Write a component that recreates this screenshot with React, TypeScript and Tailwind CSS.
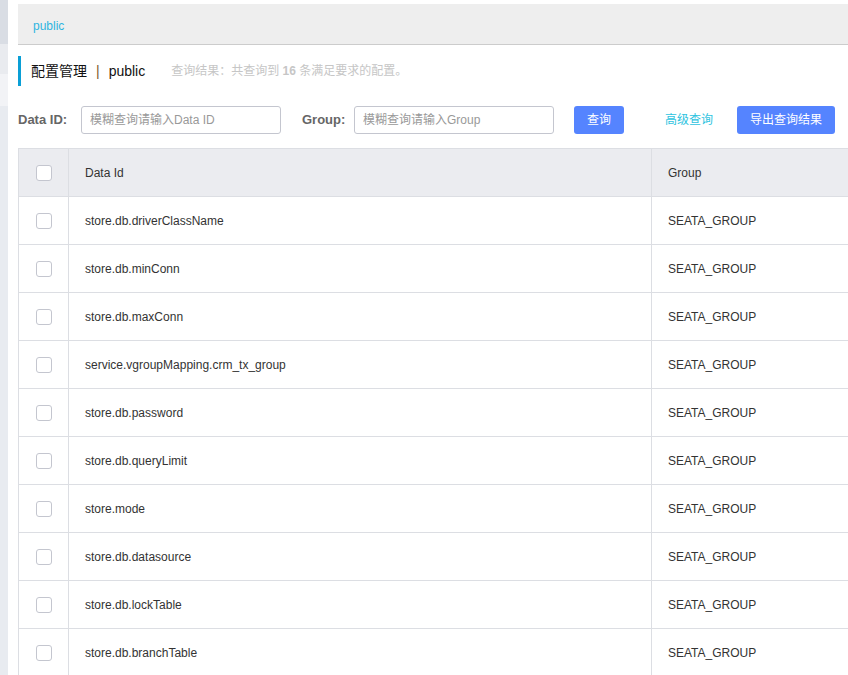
import { useState } from 'react';

const rows = [
    'store.db.driverClassName',
    'store.db.minConn',
    'store.db.maxConn',
    'service.vgroupMapping.crm_tx_group',
    'store.db.password',
    'store.db.queryLimit',
    'store.mode',
    'store.db.datasource',
    'store.db.lockTable',
    'store.db.branchTable',
];

function Checkbox() {
    const [checked, setChecked] = useState(false);
    return (
        <button
            onClick={() => setChecked(!checked)}
            className={`w-4 h-4 rounded-[3px] border ${checked ? 'bg-[#5584ff] border-[#5584ff]' : 'bg-white border-[#c4c6cf]'}`}
        />
    );
}

export default function App() {
    return (
        <div
            className="flex w-[848px] h-[675px] overflow-hidden bg-white text-[#333]"
            style={{ fontFamily: "'Liberation Sans', 'Noto Sans CJK SC', sans-serif" }}
        >
            {/* Sidebar strip */}
            <div className="flex flex-col w-[8px] shrink-0">
                <div className="h-[44px] bg-[#d9dde4]" />
                <div className="h-[30px] bg-[#e9ebef]" />
                <div className="h-[32px] bg-[#f2f3f6]" />
                <div className="flex-1 bg-[#e8ebf0]" />
            </div>

            <div className="flex-1 min-w-0 pl-[10px] pt-[4px]">
                {/* Header bar */}
                <div className="flex items-center h-[41px] pl-[15px] pt-[4px] bg-[#eeeeee] border-b border-[#cccccc]">
                    <span className="text-[12px] text-[#2eb5e0]">public</span>
                </div>

                {/* Title */}
                <div className="flex items-center h-[30px] mt-[11px] pl-[10px] border-l-[3px] border-[#0a9fd6]">
                    <span className="text-[14px] text-[#111]">配置管理</span>
                    <span className="text-[14px] text-[#7a5a2a] mx-[9px]">|</span>
                    <span className="text-[14px] text-[#111]">public</span>
                    <span className="ml-[26px] text-[12px] text-[#c6c6c6]">
                        查询结果：共查询到 <b className="font-bold">16</b> 条满足要求的配置。
                    </span>
                </div>

                {/* Search form */}
                <div className="flex items-center h-[28px] mt-[20px]">
                    <label className="w-[63px] text-[13px] font-bold text-[#666]">Data ID:</label>
                    <input
                        placeholder="模糊查询请输入Data ID"
                        className="w-[200px] h-[28px] px-[8px] text-[12px] border border-[#c4c6cf] rounded-[3px] placeholder:text-[#999] outline-none"
                    />
                    <label className="ml-[21px] w-[52px] text-[13px] font-bold text-[#666]">Group:</label>
                    <input
                        placeholder="模糊查询请输入Group"
                        className="w-[200px] h-[28px] px-[8px] text-[12px] border border-[#c4c6cf] rounded-[3px] placeholder:text-[#999] outline-none"
                    />
                    <button className="ml-[20px] w-[50px] h-[28px] rounded-[3px] bg-[#5584ff] text-white text-[12px]">
                        查询
                    </button>
                    <a className="ml-[41px] text-[12px] text-[#2ec3e0] cursor-pointer">高级查询</a>
                    <button className="ml-[24px] w-[98px] h-[28px] rounded-[3px] bg-[#5584ff] text-white text-[12px]">
                        导出查询结果
                    </button>
                </div>

                {/* Table */}
                <table className="mt-[14px] w-[1100px] border-collapse text-[12px] text-[#333] table-fixed">
                    <colgroup>
                        <col className="w-[50px]" />
                        <col className="w-[583px]" />
                        <col />
                    </colgroup>
                    <thead>
                        <tr className="h-[48px] bg-[#ebecf0]">
                            <th className="border border-[#dcdee3] font-normal">
                                <div className="flex justify-center">
                                    <Checkbox />
                                </div>
                            </th>
                            <th className="border border-[#dcdee3] font-normal text-left pl-[16px]">Data Id</th>
                            <th className="border border-[#dcdee3] font-normal text-left pl-[16px]">Group</th>
                        </tr>
                    </thead>
                    <tbody>
                        {rows.map((r) => (
                            <tr key={r} className="h-[48px]">
                                <td className="border border-[#dcdee3]">
                                    <div className="flex justify-center">
                                        <Checkbox />
                                    </div>
                                </td>
                                <td className="border border-[#dcdee3] pl-[16px]">{r}</td>
                                <td className="border border-[#dcdee3] pl-[16px]">SEATA_GROUP</td>
                            </tr>
                        ))}
                    </tbody>
                </table>
            </div>
        </div>
    );
}
